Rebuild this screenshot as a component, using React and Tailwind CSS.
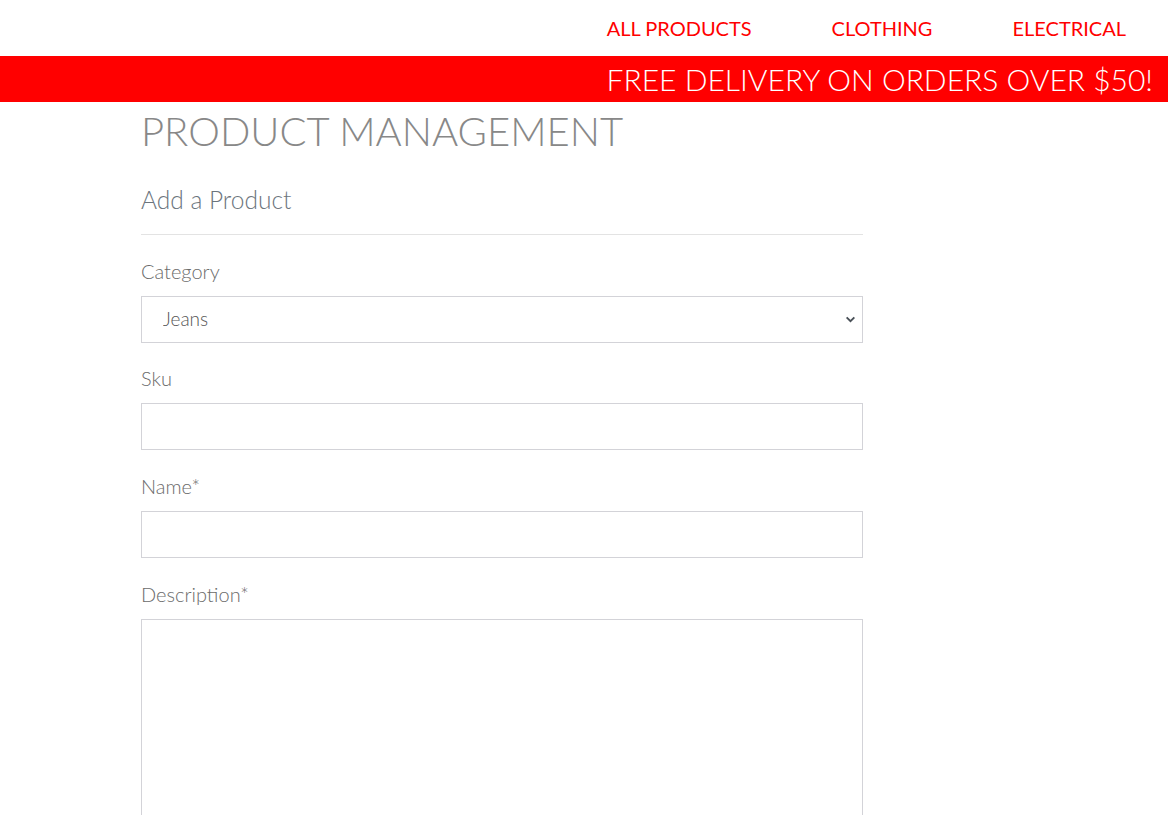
export default function App() {
  return (
    <div className="min-h-screen bg-white font-['Lato','Noto_Sans',sans-serif]">
      {/* top nav */}
      <nav className="h-[56px] flex items-center justify-end pr-[42px]">
        <ul className="flex gap-[80px] text-[20px] text-[#ff0000] leading-none">
          <li>ALL PRODUCTS</li>
          <li>CLOTHING</li>
          <li>ELECTRICAL</li>
        </ul>
      </nav>
      <div className="h-[46px] bg-[#ff0000] flex items-center justify-end pr-[15px]">
        <span className="text-white font-light text-[30px] leading-none">FREE DELIVERY ON ORDERS OVER $50!</span>
      </div>

      <main className="ml-[141px] w-[722px]">
        <h1 className="font-light text-[40px] text-[#888] leading-none mt-[9px]">PRODUCT MANAGEMENT</h1>
        <h2 className="font-light text-[24.5px] text-[#6c757d] leading-none mt-[37px]">Add a Product</h2>
        <hr className="border-0 border-t border-[#e3e3e3] mt-[21px]" />

        <form className="mt-[26px] flex flex-col text-[#6b6b6b] font-light">
          <label className="text-[20px] leading-none">Category</label>
          <div className="relative mt-[15px]">
            <select className="appearance-none w-full h-[47px] border border-[#d3d3d8] pl-[21px] text-[19px] text-[#555] font-light bg-white">
              <option>Jeans</option>
            </select>
            <svg className="absolute right-[7px] top-[18px] w-[11px] h-[11px]" viewBox="0 0 10 10">
              <path d="M1.5 3 L5 6.5 L8.5 3" fill="none" stroke="#495057" strokeWidth="1.7" />
            </svg>
          </div>

          <label className="text-[20px] leading-none mt-[25px]">Sku</label>
          <input className="mt-[15px] h-[47px] border border-[#d3d3d8]" />

          <label className="text-[20px] leading-none mt-[26px]">Name*</label>
          <input className="mt-[15px] h-[47px] border border-[#d3d3d8]" />

          <label className="text-[20px] leading-none mt-[26px]">Description*</label>
          <textarea className="mt-[15px] h-[220px] border border-[#d3d3d8] resize-none" />
        </form>
      </main>
    </div>
  );
}
